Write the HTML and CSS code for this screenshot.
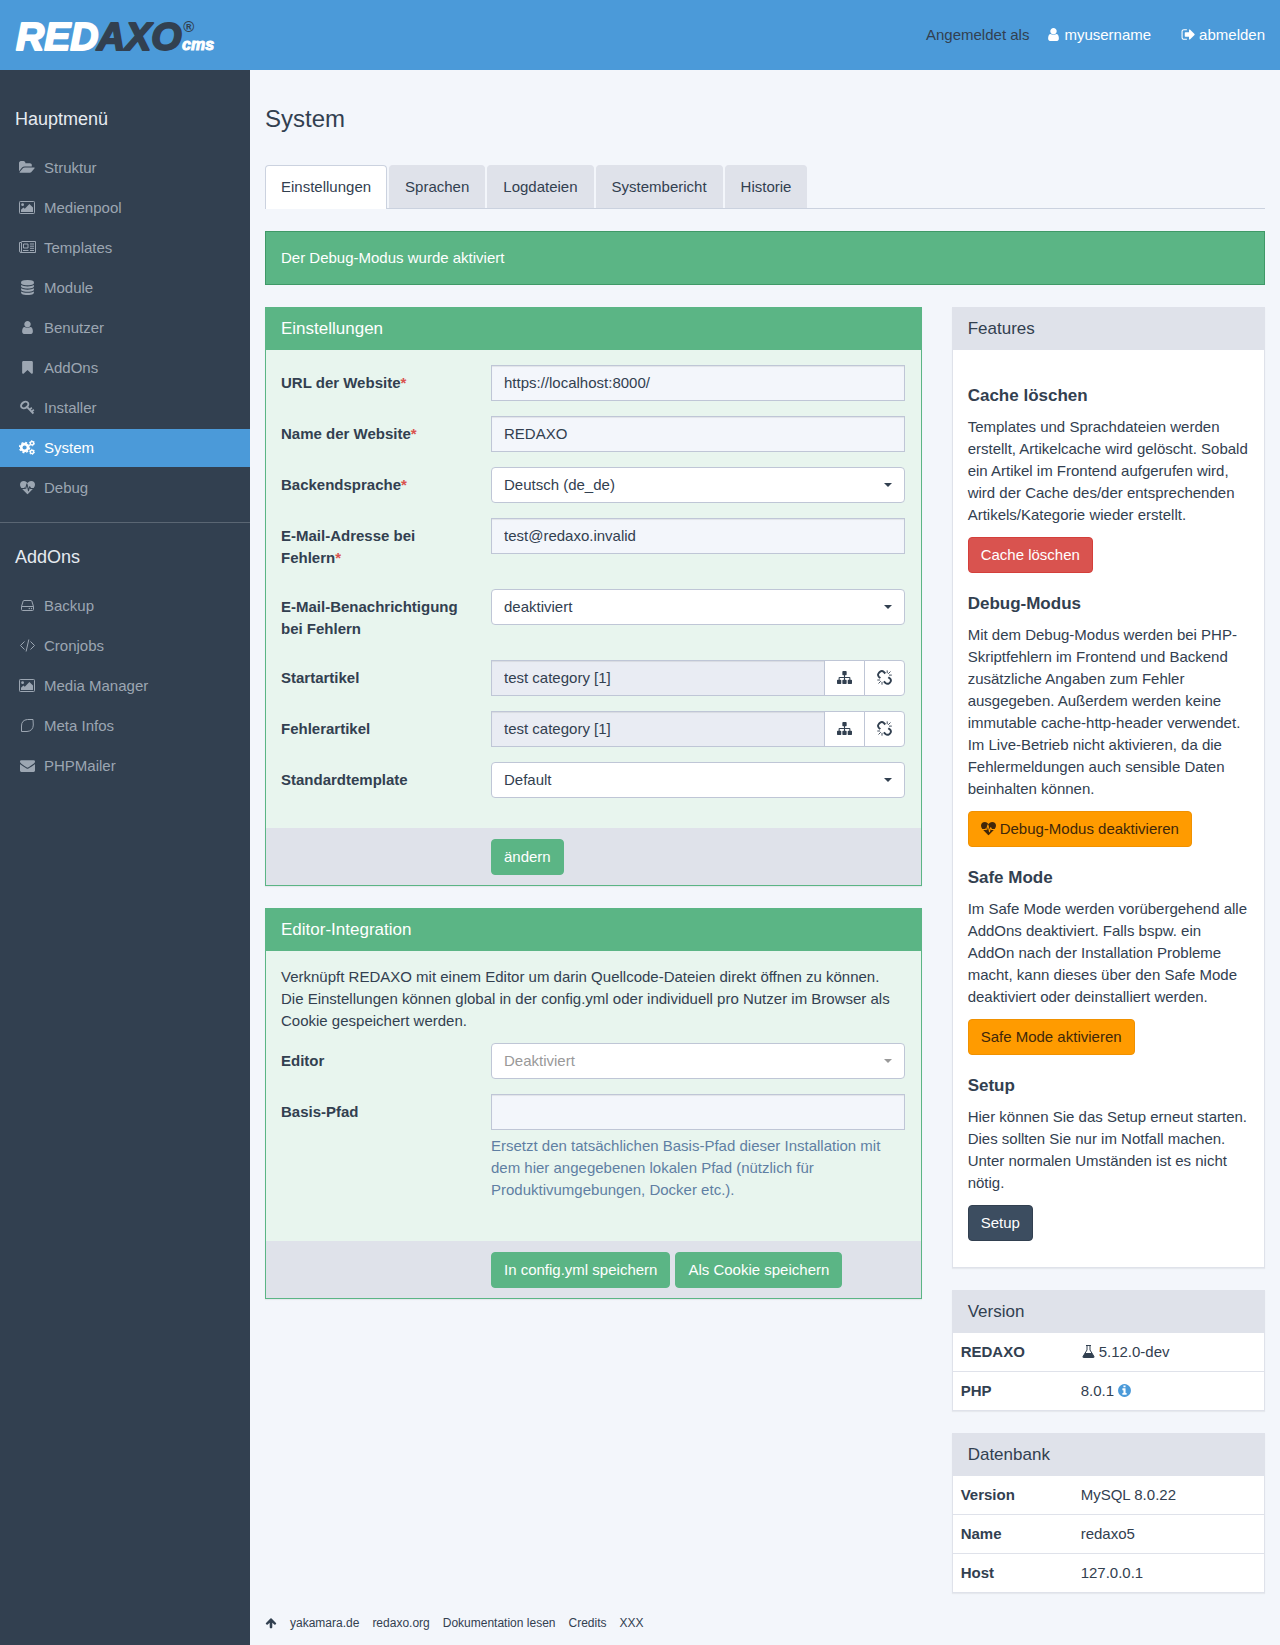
FILE: index.html
```html
<!DOCTYPE html>
<html lang="de">
<head>
<meta charset="utf-8">
<meta name="viewport" content="width=device-width, initial-scale=1">
<title>System · REDAXO CMS</title>
<link rel="stylesheet" href="styles.css">
</head>
<body id="top">
<svg class="sprite" aria-hidden="true">
  <symbol id="i-user" viewBox="0 0 1792 1792"><path d="M1536 1399q0 109-62.500 187t-150.500 78h-854q-88 0-150.500-78t-62.500-187q0-85 8.500-160.500t31.500-152 58.500-131 94-89 134.500-34.500q131 128 313 128t313-128q76 0 134.500 34.500t94 89 58.500 131 31.500 152 8.500 160.500zm-256-887q0 159-112.500 271.500t-271.500 112.500-271.500-112.500-112.500-271.500 112.500-271.500 271.500-112.500 271.500 112.500 112.500 271.500z"/></symbol>
  <symbol id="i-signout" viewBox="0 0 1792 1792"><path d="M704 1440q0 4 1 20t.5 26.500-3 23.500-10 19.500-20.500 6.500h-320q-119 0-203.500-84.500t-84.500-203.500v-704q0-119 84.500-203.500t203.500-84.500h320q13 0 22.500 9.500t9.500 22.500q0 4 1 20t.5 26.500-3 23.500-10 19.500-20.500 6.500h-320q-66 0-113 47t-47 113v704q0 66 47 113t113 47h312l11.500 1 11.500 3 8 5.500 7 9 2 13.500zm928-544q0 26-19 45l-544 544q-19 19-45 19t-45-19-19-45v-288h-448q-26 0-45-19t-19-45v-384q0-26 19-45t45-19h448v-288q0-26 19-45t45-19 45 19l544 544q19 19 19 45z"/></symbol>
  <symbol id="i-folder" viewBox="0 0 1920 1792"><path d="M1879 952q0 31-31 66l-336 396q-43 51-120.500 86.500t-143.500 35.500h-1088q-34 0-60.500-13t-26.500-43q0-31 31-66l336-396q43-51 120.500-86.500t143.500-35.500h1088q34 0 60.500 13t26.500 43zm-343-344v160h-832q-94 0-197 47.500t-164 119.500l-337 396-5 6q0-4-.5-12.500t-.5-12.500v-960q0-92 66-158t158-66h320q92 0 158 66t66 158v32h544q92 0 158 66t66 158z"/></symbol>
  <symbol id="i-image" viewBox="0 0 16 15"><rect x=".5" y="1.500" width="15" height="12" rx=".8" fill="none" stroke="currentColor"/><circle cx="3.600" cy="4.700" r="1.400"/><path d="M2 12V9.800l2.400-2.400 1.400 1.400L10.400 4 14 7.600V12z"/></symbol>
  <symbol id="i-news" viewBox="0 0 17 15"><path d="M2.500 1.500h14v11h-14.500q-1.500 0-1.500-1.500V2.500h2V11q0 1.300-.8 1.500M4.500 4h4.500v4H4.500zM4 10.500h5.500M11 4h4M11 6.200h4M11 8.300h4M11 10.500h4" fill="none" stroke="currentColor"/></symbol>
  <symbol id="i-database" viewBox="0 0 1792 1792"><path d="M896 768q237 0 443-43t325-127v170q0 69-103 128t-280 93.500-385 34.500-385-34.500-280-93.500-103-128v-170q119 84 325 127t443 43zm0 768q237 0 443-43t325-127v170q0 69-103 128t-280 93.500-385 34.500-385-34.500-280-93.500-103-128v-170q119 84 325 127t443 43zm0-384q237 0 443-43t325-127v170q0 69-103 128t-280 93.500-385 34.500-385-34.500-280-93.500-103-128v-170q119 84 325 127t443 43zm0-1152q208 0 385 34.500t280 93.500 103 128v128q0 69-103 128t-280 93.500-385 34.500-385-34.500-280-93.500-103-128v-128q0-69 103-128t280-93.500 385-34.500z"/></symbol>
  <symbol id="i-bookmark" viewBox="0 0 1792 1792"><path d="M1420 128q23 0 44 9 33 13 52.500 41t19.500 62v1289q0 34-19.500 62t-52.500 41q-19 8-44 8-48 0-83-32l-441-424-441 424q-36 33-83 33-23 0-44-9-33-13-52.500-41t-19.500-62v-1289q0-34 19.500-62t52.500-41q21-9 44-9h1048z"/></symbol>
  <symbol id="i-key" viewBox="0 0 15 15"><g fill="none" stroke="currentColor"><ellipse cx="4.700" cy="5" rx="3.900" ry="2.900" transform="rotate(-35 4.700 5)" stroke-width="1.900"/><path d="M7.200 7.200l6.200 6.300" stroke-width="1.900"/><path d="M9.800 9.600l2-2M11.800 11.600l2-2" stroke-width="1.700"/></g></symbol>
  <symbol id="i-cogs" viewBox="0 0 16 15"><g fill="none" stroke="currentColor"><circle cx="5.600" cy="7.500" r="3.400" stroke-width="2.600"/><circle cx="5.600" cy="7.500" r="5" stroke-width="1.400" stroke-dasharray="2 1.927"/><circle cx="13" cy="3.200" r="1.700" stroke-width="1.500"/><circle cx="13" cy="3.200" r="2.600" stroke-width=".9" stroke-dasharray="1.300 1.423"/><circle cx="13" cy="11.900" r="1.700" stroke-width="1.500"/><circle cx="13" cy="11.900" r="2.600" stroke-width=".9" stroke-dasharray="1.300 1.423"/></g></symbol>
  <symbol id="i-heart" viewBox="0 0 15 15"><path d="M4.100 8h-2.800Q0 6.300 0 4.800 0 1 4 1q1.700 0 3.500 2Q9.300 1 11 1q4 0 4 3.800 0 1.500-1.300 3.200H11l-.8-1.600q-.4-.6-.9 0L8.600 8.500 7.400 3.800q-.5-.9-1 0L5.200 8.200 5 7.500q-.4-.5-.9.500zM2.200 9H4.600q.4 0 .6-.4L6 9.200 7 6l1 4.900q.5.800.9 0l.9-2.800.3.600q.2.300.6.300h2.100L7.900 14q-.4.300-.8 0z"/></symbol>
  <symbol id="i-hdd" viewBox="0 0 15 15"><path d="M1.500 8.500L3.200 3q.2-.5.800-.5h7q.6 0 .8.500l1.700 5.500v3q0 1-1 1h-10q-1 0-1-1zh12" fill="none" stroke="currentColor"/><circle cx="9.300" cy="10.500" r=".7"/><circle cx="11.500" cy="10.500" r=".7"/></symbol>
  <symbol id="i-code" viewBox="0 0 15 15"><path d="M4.500 3.500l-4 4 4 4M10.500 3.500l4 4-4 4M8.800 1.500l-2.700 12" fill="none" stroke="currentColor"/></symbol>
  <symbol id="i-leaf" viewBox="0 0 15 15"><path d="M1.500 13.500V8q0-6 6-6.500h5.500l.3 5.500q-.3 6-6.300 6.500z" fill="none" stroke="currentColor"/></symbol>
  <symbol id="i-envelope" viewBox="0 0 1792 1792"><path d="M1792 710v794q0 66-47 113t-113 47h-1472q-66 0-113-47t-47-113v-794q44 49 101 87 362 246 497 345 57 42 92.500 65.500t94.500 48 110 24.500h2q51 0 110-24.500t94.500-48 92.500-65.500q170-123 498-345 57-39 100-87zm0-294q0 79-49 151t-122 123q-376 261-468 325-10 7-42.500 31t-54 38.500-52 32.500-57.500 27-50 9h-2q-23 0-50-9t-57.500-27-52-32.500-54-38.500-42.500-31q-91-64-262-182.500t-205-142.500q-62-42-117-115.500t-55-136.500q0-78 41.500-130t118.500-52h1472q65 0 112.500 47t47.500 113z"/></symbol>
  <symbol id="i-sitemap" viewBox="0 0 1792 1792"><path d="M1792 1248v320q0 40-28 68t-68 28h-320q-40 0-68-28t-28-68v-320q0-40 28-68t68-28h96v-192h-512v192h96q40 0 68 28t28 68v320q0 40-28 68t-68 28h-320q-40 0-68-28t-28-68v-320q0-40 28-68t68-28h96v-192h-512v192h96q40 0 68 28t28 68v320q0 40-28 68t-68 28h-320q-40 0-68-28t-28-68v-320q0-40 28-68t68-28h96v-192q0-52 38-90t90-38h512v-192h-96q-40 0-68-28t-28-68v-320q0-40 28-68t68-28h320q40 0 68 28t28 68v320q0 40-28 68t-68 28h-96v192h512q52 0 90 38t38 90v192h96q40 0 68 28t28 68z"/></symbol>
  <symbol id="i-unlink" viewBox="0 0 15 15"><g fill="none" stroke="currentColor"><path d="M3.300 8.200L1.900 6.800Q.2 4.900 1.800 3L3 1.800q2-1.500 3.900.2L8.300 3.500M11.300 7.200l1.900 1.500q1.500 1.900-.1 3.600l-.9.900q-1.800 1.400-3.700-.2L6.800 11.400" stroke-width="1.900"/><path d="M10.200.4v2.800M13.500 1.500l-2.300 2.300M12 5.100h2.800M.3 10h2.800M1.500 13.500l2.300-2.300M5 14.700v-2.800" stroke-width=".9"/></g></symbol>
  <symbol id="i-flask" viewBox="0 0 14 15"><path d="M4.500 1.500h5M5.500 1.500V6L1.600 12.400q-.6 1.100.5 1.100h9.800q1.100 0 .5-1.100L8.500 6V1.500" fill="none" stroke="currentColor"/><path d="M3.600 9h6.800l2.100 3.400q.4 1.100-.6 1.100H2.100q-1 0-.6-1.100z"/></symbol>
  <symbol id="i-info" viewBox="0 0 1792 1792"><path d="M1152 1376v-160q0-14-9-23t-23-9h-96v-512q0-14-9-23t-23-9h-320q-14 0-23 9t-9 23v160q0 14 9 23t23 9h96v320h-96q-14 0-23 9t-9 23v160q0 14 9 23t23 9h448q14 0 23-9t9-23zm-128-896v-160q0-14-9-23t-23-9h-192q-14 0-23 9t-9 23v160q0 14 9 23t23 9h192q14 0 23-9t9-23zm640 416q0 209-103 385.500t-279.500 279.500-385.500 103-385.500-103-279.500-279.500-103-385.500 103-385.500 279.500-279.500 385.500-103 385.500 103 279.500 279.500 103 385.500z"/></symbol>
  <symbol id="i-up" viewBox="0 0 1792 1792"><path d="M1675 971q0 51-37 90l-75 75q-38 38-91 38-54 0-90-38l-294-293v704q0 52-37.500 84.500t-90.500 32.500h-128q-53 0-90.500-32.500t-37.500-84.500v-704l-294 293q-36 38-90 38t-90-38l-75-75q-38-38-38-90 0-53 38-91l651-651q35-37 90-37 54 0 91 37l651 651q37 39 37 91z"/></symbol>
</svg>

<header class="topbar">
  <a class="logo" href="#top" aria-label="REDAXO CMS">
    <svg width="202" height="60" viewBox="0 0 202 60">
      <g class="logo-word"><text x="1" y="45" class="logo-light">RED</text><text x="82" y="45" class="logo-dark">AXO</text></g>
      <text x="168" y="27" class="logo-reg">®</text>
      <text x="167" y="45" class="logo-cms">cms</text>
    </svg>
  </a>
  <div class="account">
    <span class="account-label">Angemeldet als</span>
    <a href="#profil"><svg class="icon"><use href="#i-user"/></svg><span>myusername</span></a>
    <a class="logout" href="#logout"><svg class="icon"><use href="#i-signout"/></svg><span>abmelden</span></a>
  </div>
</header>

<div class="layout">
  <nav class="sidebar">
    <section class="nav-group">
      <h2>Hauptmenü</h2>
      <ul>
        <li><a href="#struktur"><svg class="icon wide"><use href="#i-folder"/></svg>Struktur</a></li>
        <li><a href="#medienpool"><svg class="icon wide"><use href="#i-image"/></svg>Medienpool</a></li>
        <li><a href="#templates"><svg class="icon wider"><use href="#i-news"/></svg>Templates</a></li>
        <li><a href="#module"><svg class="icon"><use href="#i-database"/></svg>Module</a></li>
        <li><a href="#benutzer"><svg class="icon"><use href="#i-user"/></svg>Benutzer</a></li>
        <li><a href="#addons"><svg class="icon"><use href="#i-bookmark"/></svg>AddOns</a></li>
        <li><a href="#installer"><svg class="icon"><use href="#i-key"/></svg>Installer</a></li>
        <li><a class="active" href="#system"><svg class="icon wide"><use href="#i-cogs"/></svg>System</a></li>
        <li><a href="#debug"><svg class="icon"><use href="#i-heart"/></svg>Debug</a></li>
      </ul>
    </section>
    <section class="nav-group">
      <h2>AddOns</h2>
      <ul>
        <li><a href="#backup"><svg class="icon"><use href="#i-hdd"/></svg>Backup</a></li>
        <li><a href="#cronjobs"><svg class="icon"><use href="#i-code"/></svg>Cronjobs</a></li>
        <li><a href="#media-manager"><svg class="icon wide"><use href="#i-image"/></svg>Media Manager</a></li>
        <li><a href="#meta-infos"><svg class="icon"><use href="#i-leaf"/></svg>Meta Infos</a></li>
        <li><a href="#phpmailer"><svg class="icon"><use href="#i-envelope"/></svg>PHPMailer</a></li>
      </ul>
    </section>
  </nav>

  <div class="page">
    <main>
      <h1>System</h1>
      <nav class="tabs">
        <a class="active" href="#einstellungen">Einstellungen</a>
        <a href="#sprachen">Sprachen</a>
        <a href="#logdateien">Logdateien</a>
        <a href="#systembericht">Systembericht</a>
        <a href="#historie">Historie</a>
      </nav>
      <div class="alert" role="status">Der Debug-Modus wurde aktiviert</div>

      <div class="columns">
        <div class="col">
          <form class="panel panel-edit">
            <h2 class="panel-head">Einstellungen</h2>
            <div class="panel-body">
              <div class="field"><label for="url">URL der Website<span class="req">*</span></label><input id="url" type="text" value="https://localhost:8000/"></div>
              <div class="field"><label for="name">Name der Website<span class="req">*</span></label><input id="name" type="text" value="REDAXO"></div>
              <div class="field"><label for="lang">Backendsprache<span class="req">*</span></label><div class="select"><select id="lang"><option>Deutsch (de_de)</option></select></div></div>
              <div class="field"><label for="mail">E-Mail-Adresse bei Fehlern<span class="req">*</span></label><input id="mail" type="text" value="test@redaxo.invalid"></div>
              <div class="field"><label for="notify">E-Mail-Benachrichtigung bei Fehlern</label><div class="select"><select id="notify"><option>deaktiviert</option></select></div></div>
              <div class="field"><label for="start">Startartikel</label>
                <div class="input-group"><input id="start" type="text" value="test category [1]" readonly><button type="button" aria-label="Artikel auswählen"><svg class="icon"><use href="#i-sitemap"/></svg></button><button type="button" aria-label="Artikel entfernen"><svg class="icon"><use href="#i-unlink"/></svg></button></div></div>
              <div class="field"><label for="error">Fehlerartikel</label>
                <div class="input-group"><input id="error" type="text" value="test category [1]" readonly><button type="button" aria-label="Artikel auswählen"><svg class="icon"><use href="#i-sitemap"/></svg></button><button type="button" aria-label="Artikel entfernen"><svg class="icon"><use href="#i-unlink"/></svg></button></div></div>
              <div class="field"><label for="template">Standardtemplate</label><div class="select"><select id="template"><option>Default</option></select></div></div>
            </div>
            <div class="panel-foot"><button class="btn btn-save" type="button">ändern</button></div>
          </form>

          <form class="panel panel-edit">
            <h2 class="panel-head">Editor-Integration</h2>
            <div class="panel-body">
              <p>Verknüpft REDAXO mit einem Editor um darin Quellcode-Dateien direkt öffnen zu können. Die Einstellungen können global in der config.yml oder individuell pro Nutzer im Browser als Cookie gespeichert werden.</p>
              <div class="field"><label for="editor">Editor</label><div class="select select-empty"><select id="editor"><option>Deaktiviert</option></select></div></div>
              <div class="field"><label for="path">Basis-Pfad</label>
                <div><input id="path" type="text" aria-describedby="path-help"><p class="help" id="path-help">Ersetzt den tatsächlichen Basis-Pfad dieser Installation mit dem hier angegebenen lokalen Pfad (nützlich für Produktivumgebungen, Docker etc.).</p></div></div>
            </div>
            <div class="panel-foot"><button class="btn btn-save" type="button">In config.yml speichern</button><button class="btn btn-save" type="button">Als Cookie speichern</button></div>
          </form>
        </div>

        <aside class="col">
          <section class="panel">
            <h2 class="panel-head">Features</h2>
            <div class="panel-body features">
              <h3>Cache löschen</h3>
              <p>Templates und Sprachdateien werden erstellt, Artikelcache wird gelöscht. Sobald ein Artikel im Frontend aufgerufen wird, wird der Cache des/der entsprechenden Artikels/Kategorie wieder erstellt.</p>
              <button class="btn btn-delete" type="button">Cache löschen</button>
              <h3>Debug-Modus</h3>
              <p>Mit dem Debug-Modus werden bei PHP-Skriptfehlern im Frontend und Backend zusätzliche Angaben zum Fehler ausgegeben. Außerdem werden keine immutable cache-http-header verwendet. Im Live-Betrieb nicht aktivieren, da die Fehlermeldungen auch sensible Daten beinhalten können.</p>
              <button class="btn btn-warn" type="button"><svg class="icon"><use href="#i-heart"/></svg>Debug-Modus deaktivieren</button>
              <h3>Safe Mode</h3>
              <p>Im Safe Mode werden vorübergehend alle AddOns deaktiviert. Falls bspw. ein AddOn nach der Installation Probleme macht, kann dieses über den Safe Mode deaktiviert oder deinstalliert werden.</p>
              <button class="btn btn-warn" type="button">Safe Mode aktivieren</button>
              <h3>Setup</h3>
              <p>Hier können Sie das Setup erneut starten. Dies sollten Sie nur im Notfall machen. Unter normalen Umständen ist es nicht nötig.</p>
              <button class="btn btn-setup" type="button">Setup</button>
            </div>
          </section>

          <section class="panel">
            <h2 class="panel-head">Version</h2>
            <table>
              <tr><th scope="row">REDAXO</th><td><span class="value"><svg class="icon"><use href="#i-flask"/></svg>5.12.0-dev</span></td></tr>
              <tr><th scope="row">PHP</th><td><span class="value">8.0.1<a href="#phpinfo" aria-label="phpinfo"><svg class="icon"><use href="#i-info"/></svg></a></span></td></tr>
            </table>
          </section>

          <section class="panel">
            <h2 class="panel-head">Datenbank</h2>
            <table>
              <tr><th scope="row">Version</th><td>MySQL 8.0.22</td></tr>
              <tr><th scope="row">Name</th><td>redaxo5</td></tr>
              <tr><th scope="row">Host</th><td>127.0.0.1</td></tr>
            </table>
          </section>
        </aside>
      </div>
    </main>

    <footer class="footer">
      <a href="#top" aria-label="Nach oben"><svg class="icon"><use href="#i-up"/></svg></a>
      <a href="#yakamara">yakamara.de</a>
      <a href="#redaxo">redaxo.org</a>
      <a href="#doku">Dokumentation lesen</a>
      <a href="#credits">Credits</a>
      <span>XXX</span>
    </footer>
  </div>
</div>
</body>
</html>
```
FILE: styles.css
```css
:root {
  --text: #324050;
  --blue: #4b9ad9;
  --green: #5bb585;
  --grey: #dfe2ea;
  --page: #f3f6fb;
  --line: #bfc6d6;
}

* { box-sizing: border-box; }

body {
  display: flex;
  flex-direction: column;
  min-height: 100vh;
  margin: 0;
  background: var(--page);
  color: var(--text);
  font: 15px/22px "Liberation Sans", Arial, sans-serif;
}

h1, h2, h3, p, ul { margin: 0; padding: 0; font-weight: 400; }
ul { list-style: none; }
a { color: inherit; text-decoration: none; }
input, select, button { font: inherit; color: inherit; }

.sprite { position: absolute; width: 0; height: 0; }

.icon {
  flex: none;
  display: block;
  width: 15px;
  height: 15px;
  margin-bottom: 2px;
  fill: currentColor;
}

/* Top bar */
.topbar {
  display: flex;
  align-items: center;
  justify-content: space-between;
  min-height: 70px;
  padding: 0 15px;
  background: var(--blue);
}
.logo svg { display: block; }
.logo text { font-family: "Liberation Sans", Arial, sans-serif; font-weight: 700; font-style: italic; }
.logo-word { font-size: 39px; stroke-width: 2; stroke-linejoin: round; }
.logo-light { fill: #fff; stroke: #fff; }
.logo-dark { fill: var(--text); stroke: var(--text); }
.logo .logo-reg { font-size: 15px; fill: var(--text); }
.logo .logo-cms { font-size: 16px; fill: #fff; stroke: #fff; stroke-width: 1; }

.account { display: flex; align-items: center; gap: 17px; color: #fff; }
.account-label { color: var(--text); }
.account a { display: flex; align-items: center; gap: 3px; }
.account .logout { margin-left: 13px; }

/* Sidebar */
.layout { flex: 1; display: flex; }
.sidebar { flex: none; width: 250px; background: var(--text); color: #9ca6b2; }
.nav-group { padding: 38px 0 15px; }
.nav-group + .nav-group { padding-top: 23px; border-top: 1px solid #5a6673; }
.nav-group h2 { margin-bottom: 19px; padding: 0 15px; font-size: 18px; color: #e6ebf0; }
.nav-group ul { display: grid; gap: 2px; }
.nav-group a {
  display: grid;
  grid-template-columns: 25px 1fr;
  column-gap: 4px;
  align-items: center;
  padding: 8px 15px;
}
.nav-group .icon { justify-self: center; }
.nav-group .wide { width: 16px; margin-right: 1px; }
.nav-group .wider { width: 17px; }
.nav-group .active { background: var(--blue); color: #fff; }

/* Page */
.page {
  flex: 1;
  display: flex;
  flex-direction: column;
  min-width: 0;
  padding: 34px 15px 14px;
}
main { flex: 1; }
h1 { margin-bottom: 31px; font-size: 24px; line-height: 30px; }

.tabs { display: flex; gap: 2px; margin-bottom: 22px; border-bottom: 1px solid #cbd2df; }
.tabs a {
  padding: 10px 15px;
  border: 1px solid var(--grey);
  border-bottom: 0;
  border-radius: 4px 4px 0 0;
  background: var(--grey);
}
.tabs .active { margin-bottom: -1px; padding-bottom: 11px; border-color: #cbd2df; background: #fff; }

.alert { margin-bottom: 22px; padding: 15px; border: 1px solid #3f9967; background: var(--green); color: #fff; }

.columns { display: grid; grid-template-columns: 2fr 1fr; margin: 0 -15px; }
.col { min-width: 0; padding: 0 15px; }

/* Panels */
.panel {
  margin-bottom: 22px;
  border: 1px solid var(--grey);
  background: #fff;
  box-shadow: 0 1px 1px rgba(0, 0, 0, .05);
}
.panel-head { padding: 10px 15px; background: var(--grey); font-size: 17px; }
.panel-body { padding: 15px; }
.panel-edit { border-color: var(--green); background: #e8f5ee; }
.panel-edit .panel-head { background: var(--green); color: #fff; }
.panel-edit .panel-body { padding: 15px 16px 30px 15px; }
.panel-body p { margin-bottom: 11px; }
.panel-foot { display: flex; gap: 5px; padding: 11px 15px 10px 225px; background: var(--grey); }

/* Form */
.field { display: grid; grid-template-columns: 210px 1fr; align-items: start; }
.field + .field { margin-top: 15px; }
.field label { padding: 7px 20px 5px 0; font-weight: 700; }
.req { color: #d9534f; }
.field .help { margin: 5px 0 10px; color: #5f7fa3; }

.field input, select {
  display: block;
  width: 100%;
  height: 36px;
  margin: 0;
  padding: 6px 12px;
  border: 1px solid var(--line);
  border-radius: 0;
}
.field input { padding-bottom: 8px; background: var(--page); box-shadow: inset 0 1px 1px rgba(0, 0, 0, .075); }
.field input:read-only { background: #e9ecf3; }

.select { display: grid; align-items: center; }
.select select { grid-area: 1 / 1; appearance: none; border-radius: 4px; background: #fff; }
.select::after {
  content: "";
  grid-area: 1 / 1;
  justify-self: end;
  margin-right: 13px;
  border: 4px solid transparent;
  border-top-color: currentColor;
  border-bottom: 0;
  pointer-events: none;
}
.select-empty { color: #999; }

.input-group { display: flex; }
.input-group input { flex: 1; min-width: 0; }
.input-group button {
  height: 36px;
  margin-left: -1px;
  padding: 0 12px;
  border: 1px solid var(--line);
  background: #fff;
}
.input-group button:last-child { border-radius: 0 4px 4px 0; }

.btn {
  display: flex;
  align-items: center;
  gap: 4px;
  height: 36px;
  padding: 6px 12px;
  border: 1px solid;
  border-radius: 4px;
}
.btn-save { background: var(--green); border-color: var(--green); color: #fff; }
.btn-delete { background: #d9534f; border-color: #d43f3a; color: #fff; }
.btn-warn { background: #ff9b00; border-color: #f09100; color: #40270a; }
.btn-setup { background: #3c4d60; border-color: #324050; color: #fff; }

.features { padding-bottom: 26px; }
.features h3 { margin: 20px 0 9px; font-size: 17px; font-weight: 700; }

/* Tables */
table { width: 100%; border-collapse: collapse; }
th, td { padding: 8px; text-align: left; }
th { width: 120px; }
tr + tr { border-top: 1px solid var(--grey); }
.value { display: flex; align-items: center; gap: 3px; }
.value a { color: var(--blue); }

/* Footer */
.footer { display: flex; align-items: center; gap: 13px; font-size: 12px; line-height: 16px; }
.footer .icon { width: 12px; height: 12px; margin-bottom: 0; }
```
